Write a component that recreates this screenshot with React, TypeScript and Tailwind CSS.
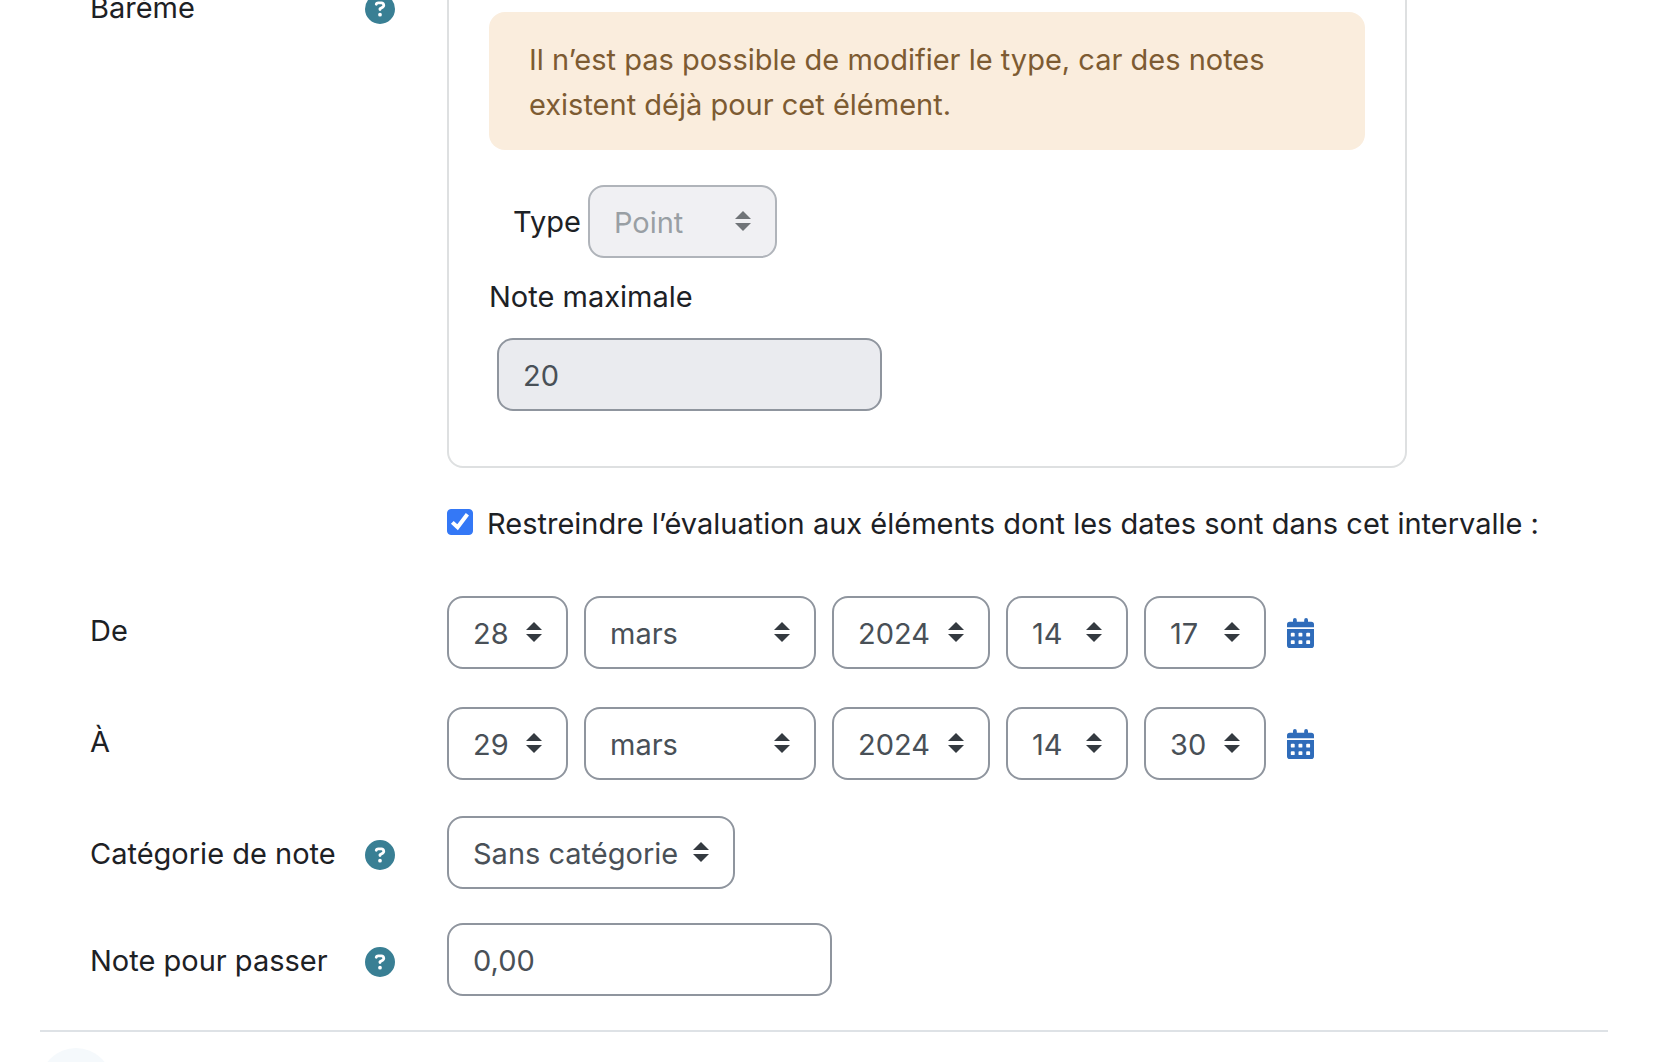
import React, { useState } from 'react';
import { FaCircleQuestion } from 'react-icons/fa6';

interface SelectFieldProps {
  id: string;
  label?: string;
  options: string[];
  initial: string;
  width: string;
  disabled?: boolean;
}

interface DateRow {
  id: string;
  label: string;
  day: string;
  month: string;
  year: string;
  hour: string;
  minute: string;
}

const days = Array.from({ length: 31 }, (_, i) => String(i + 1));
const hours = Array.from({ length: 24 }, (_, i) => String(i).padStart(2, '0'));
const minutes = Array.from({ length: 60 }, (_, i) => String(i).padStart(2, '0'));
const years = ['2022', '2023', '2024', '2025', '2026'];
const months = [
  'janvier',
  'février',
  'mars',
  'avril',
  'mai',
  'juin',
  'juillet',
  'août',
  'septembre',
  'octobre',
  'novembre',
  'décembre',
];

const dateRows: DateRow[] = [
  { id: 'from', label: 'De', day: '28', month: 'mars', year: '2024', hour: '14', minute: '17' },
  { id: 'to', label: 'À', day: '29', month: 'mars', year: '2024', hour: '14', minute: '30' },
];

function SelectField({ id, label, options, initial, width, disabled }: SelectFieldProps) {
  const [value, setValue] = useState(initial);

  return (
    <div className={`relative ${width} ${disabled ? 'opacity-70' : ''}`}>
      <select
        id={id}
        aria-label={label}
        value={value}
        disabled={disabled}
        onChange={(e) => setValue(e.target.value)}
        className="block h-[73px] w-full appearance-none rounded-2xl border-2 border-[#8f959e] bg-white pt-0.5 pl-6 text-[#495057] disabled:bg-[#eaebef] disabled:text-[#6f777e] disabled:opacity-100"
      >
        {options.map((option) => (
          <option key={option}>{option}</option>
        ))}
      </select>
      <svg
        viewBox="0 0 4 5"
        className="pointer-events-none absolute top-[26px] right-[26px] h-5 w-4 fill-[#343a40]"
        aria-hidden="true"
      >
        <path d="M2 0L0 2h4zm0 5L0 3h4z" />
      </svg>
    </div>
  );
}

function HelpButton({ topic }: { topic: string }) {
  return (
    <button type="button" aria-label={`Aide sur ${topic}`} className="pt-0.5 text-[#397f94]">
      <FaCircleQuestion className="size-[30px]" />
    </button>
  );
}

function CalendarIcon() {
  return (
    <svg viewBox="0 0 27 30" className="h-[30px] w-[27px] fill-current" aria-hidden="true">
      <path d="M6 3.7V1.9a1.9 1.9 0 0 1 3.8 0v1.8h7.4V1.9a1.9 1.9 0 0 1 3.8 0v1.8h3.2A2.8 2.8 0 0 1 27 6.5V9.2H0V6.5a2.8 2.8 0 0 1 2.8-2.8z" />
      <path
        fillRule="evenodd"
        d="M0 11.1h27v16.1a2.8 2.8 0 0 1-2.8 2.8H2.8A2.8 2.8 0 0 1 0 27.2zM4.7 14.7a.9.9 0 0 0-.9.9v2.1a.9.9 0 0 0 .9.9h2.1a.9.9 0 0 0 .9-.9v-2.1a.9.9 0 0 0-.9-.9zM12.4 14.7a.9.9 0 0 0-.9.9v2.1a.9.9 0 0 0 .9.9h2.1a.9.9 0 0 0 .9-.9v-2.1a.9.9 0 0 0-.9-.9zM20.1 14.7a.9.9 0 0 0-.9.9v2.1a.9.9 0 0 0 .9.9h2.1a.9.9 0 0 0 .9-.9v-2.1a.9.9 0 0 0-.9-.9zM4.7 22.2a.9.9 0 0 0-.9.9v2.1a.9.9 0 0 0 .9.9h2.1a.9.9 0 0 0 .9-.9v-2.1a.9.9 0 0 0-.9-.9zM12.4 22.2a.9.9 0 0 0-.9.9v2.1a.9.9 0 0 0 .9.9h2.1a.9.9 0 0 0 .9-.9v-2.1a.9.9 0 0 0-.9-.9zM20.1 22.2a.9.9 0 0 0-.9.9v2.1a.9.9 0 0 0 .9.9h2.1a.9.9 0 0 0 .9-.9v-2.1a.9.9 0 0 0-.9-.9z"
      />
    </svg>
  );
}

export default function App() {
  const [restrict, setRestrict] = useState(true);
  const [gradePass, setGradePass] = useState('0,00');

  return (
    <main className="h-screen overflow-hidden bg-white pr-[58px] pl-10 font-['Inter',sans-serif] text-[29px] leading-[45px] text-[#1d2125]">
      <form className="pl-[50px]" onSubmit={(e) => e.preventDefault()}>
        {/* Barème */}
        <div className="-mt-10 grid grid-cols-[357px_1fr]">
          <div className="flex items-center justify-between self-start pt-[25px] pr-[52px]">
            <span>Barème</span>
            <HelpButton topic="Barème" />
          </div>
          <fieldset className="max-w-[960px] rounded-2xl border-2 border-[#dee0e1] px-10 pt-[50px] pb-[55px]">
            <div role="alert" className="rounded-2xl bg-[#faeddd] px-10 pt-[25px] pb-[23px] text-[#7d5b32]">
              Il n’est pas possible de modifier le type, car des notes existent déjà pour cet élément.
            </div>
            <div className="mt-[35px] flex items-center gap-[7px] pl-6">
              <label htmlFor="grade-type">Type</label>
              <SelectField
                id="grade-type"
                options={['Aucun', 'Barème', 'Point']}
                initial="Point"
                width="w-[189px]"
                disabled
              />
            </div>
            <label htmlFor="grade-max" className="mt-4 block">
              Note maximale
            </label>
            <input
              id="grade-max"
              type="text"
              value="20"
              disabled
              readOnly
              className="mt-[19px] ml-2 block h-[73px] w-[385px] rounded-2xl border-2 border-[#8f959e] bg-[#eaebef] px-6 pt-0.5 text-[#495057]"
            />
          </fieldset>
        </div>

        {/* Date restriction */}
        <div className="mt-[33px] flex items-center gap-3.5 pl-[357px]">
          <div className="relative mb-1 size-[26px]">
            <input
              id="restrict"
              type="checkbox"
              checked={restrict}
              onChange={(e) => setRestrict(e.target.checked)}
              className="block size-[26px] appearance-none rounded-sm border border-[#8f959e] checked:border-[#3478f6] checked:bg-[#3478f6]"
            />
            {restrict && (
              <svg
                viewBox="0 0 26 26"
                className="pointer-events-none absolute inset-0 fill-none stroke-white stroke-4"
                aria-hidden="true"
              >
                <path d="M5.3 13.4L10.6 18.3L20.4 5.2" />
              </svg>
            )}
          </div>
          <label htmlFor="restrict">
            Restreindre l’évaluation aux éléments dont les dates sont dans cet intervalle :
          </label>
        </div>

        <div className="mt-[50px] flex flex-col gap-[38px]">
          {dateRows.map((row) => (
            <div key={row.id} role="group" aria-label={row.label} className="grid grid-cols-[357px_1fr] items-center">
              <span className="pb-1">{row.label}</span>
              <div className="flex items-center gap-4">
                <SelectField id={`${row.id}-day`} label="Jour" options={days} initial={row.day} width="w-[121px]" />
                <SelectField id={`${row.id}-month`} label="Mois" options={months} initial={row.month} width="w-[232px]" />
                <SelectField id={`${row.id}-year`} label="Année" options={years} initial={row.year} width="w-[158px]" />
                <SelectField id={`${row.id}-hour`} label="Heure" options={hours} initial={row.hour} width="w-[122px]" />
                <SelectField id={`${row.id}-minute`} label="Minute" options={minutes} initial={row.minute} width="w-[122px]" />
                <button type="button" aria-label="Calendrier" className="ml-[5px] text-[#2f6cba]">
                  <CalendarIcon />
                </button>
              </div>
            </div>
          ))}
        </div>

        {/* Catégorie et note */}
        <div className="mt-9 flex flex-col gap-[34px]">
          <div className="grid grid-cols-[357px_1fr] items-center">
            <div className="flex items-center justify-between pt-0.5 pr-[52px]">
              <label htmlFor="category">Catégorie de note</label>
              <HelpButton topic="Catégorie de note" />
            </div>
            <SelectField id="category" options={['Sans catégorie']} initial="Sans catégorie" width="w-[288px]" />
          </div>
          <div className="grid grid-cols-[357px_1fr] items-center">
            <div className="flex items-center justify-between pt-0.5 pr-[52px]">
              <label htmlFor="grade-pass">Note pour passer</label>
              <HelpButton topic="Note pour passer" />
            </div>
            <input
              id="grade-pass"
              type="text"
              value={gradePass}
              onChange={(e) => setGradePass(e.target.value)}
              className="block h-[73px] w-[385px] rounded-2xl border-2 border-[#8f959e] bg-white px-6 pt-0.5 text-[#495057]"
            />
          </div>
        </div>
      </form>

      {/* Next section */}
      <div className="mt-[34px] border-t-2 border-[#dee2e6] pt-4">
        <button type="button" aria-label="Déplier la section" className="block size-[72px] rounded-full bg-[#f5f9fc]" />
      </div>
    </main>
  );
}
